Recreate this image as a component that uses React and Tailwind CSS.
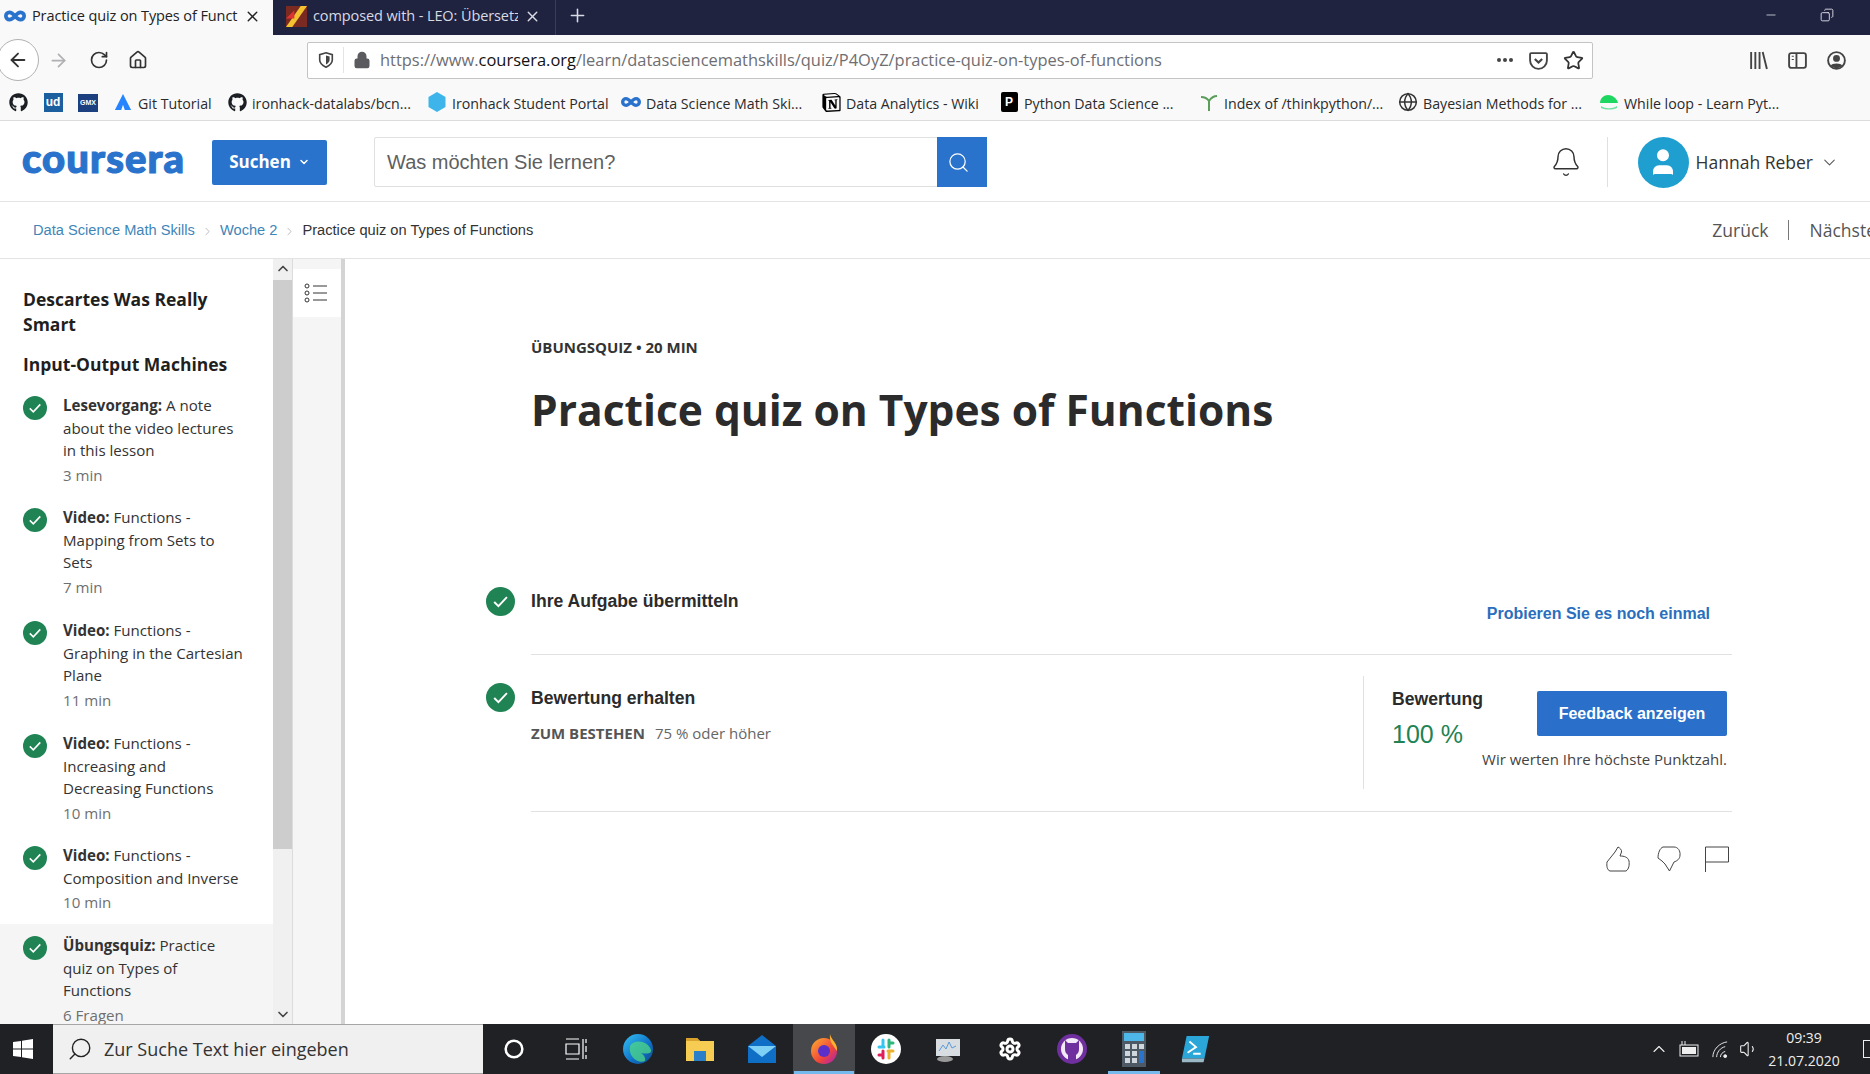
import React from "react";
import { ArrowLeft, ArrowRight, RotateCw, Home, Lock, Star, Search, Bell, ChevronDown, ChevronUp, ChevronRight, Infinity as Inf, X, Plus, Minus, Copy, Settings, Volume1, Globe, Circle, User } from "lucide-react";
import { FaGithub } from "react-icons/fa";
import { SiNotion } from "react-icons/si";

const Co = ({ c = "w-[20px] h-[20px]" }) => <Inf className={`${c} text-[#2a73cc]`} strokeWidth={4} />;
const Gh = () => <FaGithub className="w-[19px] h-[19px] text-[#1b1f23]" />;

const Check = ({ c = "w-[24px] h-[24px]" }) => (
  <svg viewBox="0 0 24 24" className={`${c} shrink-0`}>
    <circle cx="12" cy="12" r="12" fill="#1f8354" />
    <path d="M6.8 12.4l3.5 3.4 7-7.4" fill="none" stroke="#fff" strokeWidth="1.6" />
  </svg>
);

const bookmarks = [
  { w: "w-[35px]", icon: <Gh /> },
  { w: "w-[35px]", icon: <span className="w-[19px] h-[19px] bg-[#1c5f9e] text-white text-[12px] font-bold leading-[19px] text-center font-['Liberation_Sans',sans-serif]">ud</span> },
  { w: "w-[35px]", icon: <span className="w-[20px] h-[18px] bg-[#1c3f80] text-white text-[7px] font-bold leading-[18px] text-center font-['Liberation_Sans',sans-serif]">GMX</span> },
  { w: "w-[114px]", icon: <svg viewBox="0 0 20 20" className="w-[18px] h-[20px]"><path d="M10 1L1 19h7l2-6 2 6h7z" fill="#2684ff" /></svg>, t: "Git Tutorial" },
  { w: "w-[200px]", icon: <Gh />, t: "ironhack-datalabs/bcn..." },
  { w: "w-[194px]", icon: <svg viewBox="0 0 20 20" className="w-[20px] h-[20px]"><path d="M10 0l8.500 5v10L10 20l-8.500-5V5z" fill="#3db5ea" /></svg>, t: "Ironhack Student Portal" },
  { w: "w-[200px]", icon: <Co />, t: "Data Science Math Ski..." },
  { w: "w-[178px]", icon: <SiNotion className="w-[19px] h-[19px] text-black" />, t: "Data Analytics - Wiki" },
  { w: "w-[200px]", icon: <span className="w-[17px] h-[20px] bg-black rounded-[2px] text-white text-[12px] font-bold leading-[20px] text-center font-['Liberation_Sans',sans-serif]">P</span>, t: "Python Data Science ..." },
  { w: "w-[199px]", icon: <svg viewBox="0 0 20 20" className="w-[20px] h-[20px]"><path d="M10 19V9M10 9C8 6 5 5 2 5M10 9c2-3 5-5 8-5" fill="none" stroke="#5a9e5a" strokeWidth="2" /></svg>, t: "Index of /thinkpython/..." },
  { w: "w-[201px]", icon: <Globe className="w-[20px] h-[20px] text-[#333]" strokeWidth={1.8} />, t: "Bayesian Methods for ..." },
  { w: "w-[190px]", icon: <svg viewBox="0 0 20 20" className="w-[20px] h-[20px]"><path d="M1 11c0-5 4-8 8-8s9 3 10 8z" fill="#1ed760" /><path d="M2 14c5 3 11 3 16 0v2c-5 2-11 2-16 0z" fill="#6fe3a0" /></svg>, t: "While loop - Learn Pyt..." },
];

const items = [
  { h: "h-[112px]", b: "Lesevorgang:", t: ["A note", "about the video lectures", "in this lesson"], m: "3 min" },
  { h: "h-[113px]", b: "Video:", t: ["Functions -", "Mapping from Sets to", "Sets"], m: "7 min" },
  { h: "h-[113px]", b: "Video:", t: ["Functions -", "Graphing in the Cartesian", "Plane"], m: "11 min" },
  { h: "h-[112px]", b: "Video:", t: ["Functions -", "Increasing and", "Decreasing Functions"], m: "10 min" },
  { h: "h-[80px]", b: "Video:", t: ["Functions -", "Composition and Inverse"], m: "10 min" },
  { h: "h-[120px]", b: "Übungsquiz:", t: ["Practice", "quiz on Types of", "Functions"], m: "6 Fragen", active: true },
];

function Tabs() {
  return (
    <div className="h-[35px] bg-[#1f2340] flex items-stretch shrink-0">
      <div className="w-[273px] bg-[#f9f9fa] flex items-center pl-[4px] pb-[3px] relative">
        <Co c="w-[22px] h-[22px]" />
        <span className="ml-[6px] w-[206px] overflow-hidden whitespace-nowrap text-[14.5px] tracking-[-0.1px] text-[#222]">Practice quiz on Types of Functions</span>
        <X className="absolute right-[12px] w-[17px] h-[17px] text-[#222]" strokeWidth={2} />
      </div>
      <div className="w-[283px] flex items-center pl-[13px] pb-[3px] border-r border-[#3a3e58] relative">
        <svg viewBox="0 0 20 20" className="w-[21px] h-[21px] shrink-0"><rect width="20" height="20" fill="#7a2a20" /><path d="M0 20L14 0h6L6 20z" fill="#f2c230" /><path d="M0 12l8-8v8z" fill="#d33" /></svg>
        <span className="ml-[6px] w-[205px] overflow-hidden whitespace-nowrap text-[14.5px] tracking-[-0.1px] text-[#d8dae4]">composed with - LEO: Übersetzu</span>
        <X className="absolute right-[14px] w-[17px] h-[17px] text-[#d8dae4]" strokeWidth={2} />
      </div>
      <div className="w-[42px] pb-[5px] flex items-center justify-center"><Plus className="w-[21px] h-[21px] text-[#d8dae4]" strokeWidth={1.8} /></div>
      <div className="ml-auto pb-[6px] flex items-center text-[#e8e8f0]">
        <Minus className="w-[14px] h-[14px] mr-[42px]" strokeWidth={1.3} />
        <Copy className="w-[14px] h-[14px] mr-[36px] -scale-x-100" strokeWidth={1.5} />
      </div>
    </div>
  );
}

function Nav() {
  return (
    <div className="h-[50px] bg-[#f9f9fa] flex items-center shrink-0 relative overflow-hidden">
      <div className="w-[42px] h-[42px] rounded-full border border-[#b1b1b3] bg-white flex items-center justify-center -ml-[3px] shrink-0">
        <ArrowLeft className="w-[22px] h-[22px] text-[#333]" strokeWidth={2} />
      </div>
      <ArrowRight className="ml-[9px] w-[21px] h-[21px] text-[#b0b0b2]" strokeWidth={2} />
      <RotateCw className="ml-[20px] w-[20px] h-[20px] text-[#333]" strokeWidth={2} />
      <Home className="ml-[19px] w-[20px] h-[20px] text-[#333]" strokeWidth={2} />
      <div className="ml-[159px] shrink-0 w-[1286px] h-[37px] bg-white border border-[#c4c4c6] rounded-[2px] flex items-center">
        <svg viewBox="0 0 20 20" className="ml-[9px] w-[18px] h-[18px] shrink-0"><path d="M10 2l7 2v6c0 4-3 6-7 8-4-2-7-4-7-8V4z" fill="none" stroke="#444" strokeWidth="1.8" /><path d="M10 5l4 1v4c0 2-2 4-4 5z" fill="#444" /></svg>
        <span className="ml-[8px] w-px h-[26px] bg-[#e4e4e4]" />
        <Lock className="ml-[9px] w-[18px] h-[18px] text-[#5b5b5f] fill-[#5b5b5f]" strokeWidth={2} />
        <span className="ml-[9px] text-[16.45px] text-[#6e6e72] whitespace-nowrap">https://www.<span className="text-[#111]">coursera.org</span>/learn/datasciencemathskills/quiz/P4OyZ/practice-quiz-on-types-of-functions</span>
        <span className="ml-auto flex items-center">
          <span className="flex gap-[2px]"><i className="w-[4px] h-[4px] rounded-full bg-[#444]" /><i className="w-[4px] h-[4px] rounded-full bg-[#444]" /><i className="w-[4px] h-[4px] rounded-full bg-[#444]" /></span>
          <svg viewBox="0 0 20 20" className="ml-[15px] w-[21px] h-[21px]"><path d="M3 3h14a1 1 0 011 1v6a8 8 0 01-16 0V4a1 1 0 011-1z" fill="none" stroke="#444" strokeWidth="1.8" /><path d="M6.500 8.500L10 12l3.500-3.500" fill="none" stroke="#444" strokeWidth="2" /></svg>
          <Star className="ml-[14px] mr-[8px] w-[21px] h-[21px] text-[#333]" strokeWidth={2} />
        </span>
      </div>
      <div className="ml-[155px] flex items-center shrink-0">
        <svg viewBox="0 0 20 20" className="w-[21px] h-[21px]"><path d="M3 2v16M7 2v16M11 2v16M14 2l4 16" fill="none" stroke="#444" strokeWidth="1.8" /></svg>
        <svg viewBox="0 0 20 20" className="ml-[18px] w-[21px] h-[21px]"><rect x="2" y="3" width="16" height="14" rx="2" fill="none" stroke="#444" strokeWidth="1.8" /><path d="M9 3v14" stroke="#444" strokeWidth="1.8" /><path d="M4.500 6h2M4.500 9h2" stroke="#444" /></svg>
        <svg viewBox="0 0 20 20" className="ml-[18px] w-[21px] h-[21px]"><circle cx="10" cy="10" r="8" fill="none" stroke="#444" strokeWidth="1.8" /><circle cx="10" cy="8" r="3.300" fill="#444" /><path d="M4.500 15c1-3 10-3 11 0-3 3-8 3-11 0z" fill="#444" /></svg>
      </div>
    </div>
  );
}

function Bookmarks() {
  return (
    <div className="h-[35px] bg-[#f9f9fa] border-b border-[#dcdcdc] flex items-center pl-[8px] shrink-0 overflow-hidden box-content">
      {bookmarks.map((b, i) => (
        <div key={i} className={`${b.w} shrink-0 flex items-center whitespace-nowrap text-[14.2px] text-[#2b2b2b]`}>
          <span className="w-[20px] h-[20px] flex items-center justify-center shrink-0">{b.icon}</span>
          {b.t && <span className="ml-[5px] mt-[2px]">{b.t}</span>}
        </div>
      ))}
    </div>
  );
}

function Header() {
  return (
    <div className="h-[81px] bg-white border-b border-[#e3e3e3] flex items-center pl-[22px] pt-[2px] shrink-0 box-border">
      <span className="w-[160px] font-['Lato',sans-serif] font-black text-[40px] leading-none text-[#2a73cc] tracking-[1.1px] [-webkit-text-stroke:1.2px_#2a73cc] -mt-[8px]">coursera</span>
      <button className="ml-[30px] w-[115px] h-[45px] bg-[#2a73cc] rounded-[2px] text-white font-bold text-[17px] flex items-center justify-center font-['Open_Sans',sans-serif]">
        Suchen<ChevronDown className="ml-[7px] w-[12px] h-[12px]" strokeWidth={3} />
      </button>
      <div className="ml-[47px] w-[613px] h-[50px] flex border border-[#e0e0e0] rounded-[2px]">
        <span className="flex-1 pl-[12px] flex items-center text-[20px] text-[#5f5f5f] font-['Liberation_Sans',sans-serif]">Was möchten Sie lernen?</span>
        <span className="w-[50px] pr-[8px] bg-[#2a73cc] flex items-center justify-center -my-px -mr-px"><Search className="w-[23px] h-[23px] text-white" strokeWidth={1.3} /></span>
      </div>
      <Bell className="ml-auto w-[32px] h-[32px] text-[#333]" strokeWidth={1.1} />
      <span className="ml-[25px] w-px h-[50px] bg-[#e0e0e0]" />
      <span className="ml-[30px] w-[51px] h-[51px] rounded-full bg-[#1f9fd0] flex items-center justify-center"><User className="w-[32px] h-[32px] text-white fill-white" strokeWidth={1} /></span>
      <span className="ml-[7px] text-[17.5px] text-[#333]">Hannah Reber</span>
      <ChevronDown className="ml-[7px] mr-[31px] w-[19px] h-[19px] text-[#555]" strokeWidth={1.3} />
    </div>
  );
}

function Breadcrumb() {
  return (
    <div className="h-[57px] bg-white border-b border-[#e3e3e3] flex items-center pl-[33px] pt-[2px] shrink-0 overflow-hidden font-['Liberation_Sans',sans-serif] text-[14.65px] whitespace-nowrap">
      <span className="text-[#3f86b8]">Data Science Math Skills</span>
      <ChevronRight className="mx-[6px] w-[13px] h-[13px] text-[#999]" strokeWidth={1.2} />
      <span className="text-[#3f86b8]">Woche 2</span>
      <ChevronRight className="mx-[6px] w-[13px] h-[13px] text-[#999]" strokeWidth={1.2} />
      <span className="text-[#333]">Practice quiz on Types of Functions</span>
      <span className="ml-auto shrink-0 flex items-center text-[17.5px] text-[#555] font-['Open_Sans',sans-serif] -mr-[6px] -mt-[2px]">
        Zurück
        <span className="ml-[19px] w-px h-[20px] bg-[#777]" />
        <span className="ml-[21px]">Nächste</span>
      </span>
    </div>
  );
}

function Sidebar() {
  return (
    <div className="flex h-full shrink-0">
      <div className="w-[273px] h-full overflow-hidden text-[15.1px] leading-[22.5px] text-[#333]">
        <div className="pl-[23px] pr-[20px] pt-[28px] text-[17.5px] leading-[25px] font-bold text-[#1f1f1f]">Descartes Was Really<br />Smart</div>
        <div className="pl-[23px] pt-[15px] text-[17.5px] leading-[25px] font-bold text-[#1f1f1f]">Input-Output Machines</div>
        <div className="pt-[17px]">
          {items.map((it, i) => (
            <div key={i} className={`${it.h} pl-[23px] flex ${it.active ? "bg-[#f5f5f5] pt-[10px]" : ""}`}>
              <Check c="w-[24px] h-[24px] mt-[2px]" />
              <div className="ml-[16px] whitespace-nowrap">
                <div><b className="font-bold text-[#333]">{it.b}</b> {it.t[0]}</div>
                {it.t.slice(1).map((l) => <div key={l}>{l}</div>)}
                <div className="mt-[2px] text-[#6f6f6f]">{it.m}</div>
              </div>
            </div>
          ))}
        </div>
      </div>
      <div className="w-[20px] h-full bg-[#f0f0f0] border-r border-[#dcdcdc] flex flex-col items-center justify-between relative">
        <ChevronUp className="w-[16px] h-[19px] text-[#444] shrink-0" strokeWidth={2.5} />
        <div className="absolute left-0 top-[21px] w-[19px] h-[569px] bg-[#cdcdcd]" />
        <ChevronDown className="w-[16px] h-[19px] text-[#444] shrink-0" strokeWidth={2.5} />
      </div>
      <div className="w-[48px] h-full bg-[#f5f5f5] pt-[10px]">
        <div className="h-[48px] bg-white flex items-center justify-center pr-[2px]">
          <svg viewBox="0 0 24 20" className="w-[24px] h-[20px]" fill="none" stroke="#333" strokeWidth="1"><circle cx="3" cy="3" r="2" /><circle cx="3" cy="10" r="2" /><circle cx="3" cy="17" r="2" /><path d="M9 3h14M9 10h14M9 17h14" /></svg>
        </div>
      </div>
      <div className="w-[4px] h-full bg-[#d4d4d4]" />
    </div>
  );
}

function Main() {
  return (
    <div className="flex-1 h-full bg-white pl-[141px] overflow-hidden">
      <div className="w-[1246px]">
        <div className="pl-[45px]">
          <div className="pt-[77px] text-[15px] leading-[22px] font-bold text-[#333]">ÜBUNGSQUIZ • 20 MIN</div>
          <h1 className="mt-[24px] text-[42.5px] leading-[56px] font-bold text-[#2b2b2b] whitespace-nowrap">Practice quiz on Types of Functions</h1>
        </div>
        <div className="mt-[149px] flex h-[67px] font-['Liberation_Sans',sans-serif]">
          <Check c="w-[29px] h-[29px]" />
          <span className="ml-[16px] text-[17.6px] leading-[28px] font-bold text-[#2b2b2b]">Ihre Aufgabe übermitteln</span>
          <span className="ml-auto mr-[22px] mt-[13px] text-[16px] leading-[28px] font-bold text-[#2a6fbd]">Probieren Sie es noch einmal</span>
        </div>
        <div className="ml-[45px] h-px bg-[#e1e1e1]" />
        <div className="flex h-[156px]">
          <Check c="w-[29px] h-[29px] mt-[28px]" />
          <div className="ml-[16px] w-[832px] pt-[29px]">
            <div className="text-[17.6px] leading-[28px] font-bold text-[#2b2b2b] font-['Liberation_Sans',sans-serif]">Bewertung erhalten</div>
            <div className="mt-[10px] text-[15px] leading-[22px] text-[#666]"><b className="font-bold text-[#555] text-[15px]">ZUM BESTEHEN</b><span className="ml-[10px]">75 % oder höher</span></div>
          </div>
          <div className="mt-[21px] h-[113px] w-px bg-[#e1e1e1] shrink-0" />
          <div className="flex-1 relative">
            <div className="ml-[28px] pt-[32px] font-['Liberation_Sans',sans-serif]">
              <div className="text-[17.6px] leading-[24px] font-bold text-[#2b2b2b]">Bewertung</div>
              <div className="mt-[6px] text-[25px] leading-[34px] text-[#1f8354]">100 %</div>
            </div>
            <div className="absolute left-[173px] top-[36px] w-[190px] h-[45px] bg-[#2a6fc9] rounded-[2px] flex items-center justify-center text-white font-bold text-[16px] font-['Liberation_Sans',sans-serif]">Feedback anzeigen</div>
            <div className="absolute right-[5px] top-[93px] text-[15px] leading-[22px] text-[#444] whitespace-nowrap">Wir werten Ihre höchste Punktzahl.</div>
          </div>
        </div>
        <div className="ml-[45px] h-px bg-[#e1e1e1]" />
        <div className="flex justify-end items-start pr-[3px] pt-[34px]">
          <svg viewBox="0 0 24 26" className="w-[24px] h-[26px]" fill="none" stroke="#444" strokeWidth="1"><path d="M1 16L9 6l3-5c2 1 4 3 3.500 5L14 10c4 0 8 1 9 5 .5 4 0 8-3 10H4c-3-1-3.500-5-3-9z" /></svg>
          <svg viewBox="0 0 24 26" className="ml-[27px] w-[24px] h-[26px]" fill="none" stroke="#444" strokeWidth="1"><path d="M6 1h11c4 0 6.500 4 6 8 0 4-3 6-6 7l-4.500 9L8 18l-3-3-4-3C1 7 3 2 6 1z" /></svg>
          <svg viewBox="0 0 24 26" className="ml-[24px] w-[24px] h-[26px]" fill="none" stroke="#444" strokeWidth="1"><path d="M.5 26V1h23v15H.500" /></svg>
        </div>
      </div>
    </div>
  );
}

function Taskbar() {
  const slots = [
    <Circle className="w-[20px] h-[20px] text-white" strokeWidth={3} />,
    <svg viewBox="0 0 22 22" className="w-[22px] h-[22px]" fill="none" stroke="#fff" strokeWidth="1.2"><path d="M1 1h13M1 21h13M1 6h13v10H1zM18 1v20M21 1v4M21 8v6M21 17v4" /></svg>,
    <svg viewBox="0 0 32 32" className="w-[32px] h-[32px]"><defs><linearGradient id="eg" x1="0" y1="0" x2="1" y2="1"><stop offset="0" stopColor="#35c1f1" /><stop offset=".6" stopColor="#0f6fc6" /><stop offset="1" stopColor="#114a8b" /></linearGradient></defs><circle cx="16" cy="16" r="15" fill="url(#eg)" /><path d="M8 13c3-7 18-6 21 4 1 4-5 4-10 3 3 2 5 5 4 8-7 3-17-4-15-15z" fill="#4ad28a" opacity=".8" /></svg>,
    <svg viewBox="0 0 30 30" className="w-[30px] h-[30px]"><path d="M1 4h11l3 3h14v20H1z" fill="#f6cc53" /><path d="M1 4h11l3 3H1z" fill="#d8a22c" /><rect x="9" y="17" width="12" height="10" fill="#2a7fc9" /></svg>,
    <svg viewBox="0 0 30 30" className="w-[30px] h-[30px]"><path d="M15 1l14 11v17H1V12z" fill="#0f6fc6" /><path d="M1 12h28L15 23z" fill="#7fd0f5" /></svg>,
    <svg viewBox="0 0 32 32" className="w-[32px] h-[32px]"><defs><linearGradient id="ff" x1="0" y1="0" x2="1" y2="1"><stop offset="0" stopColor="#ffb02e" /><stop offset=".6" stopColor="#f0443a" /><stop offset="1" stopColor="#a31fc4" /></linearGradient></defs><circle cx="16" cy="18" r="13" fill="url(#ff)" /><path d="M22 1c1 6 8 9 7 17-4-6-8-9-7-17z" fill="#ffb02e" /><circle cx="16" cy="18" r="6" fill="#5b2fc9" /></svg>,
    <svg viewBox="0 0 30 30" className="w-[30px] h-[30px]"><circle cx="15" cy="15" r="15" fill="#fff" /><path d="M12 6v7M8 13h5" stroke="#36c5f0" strokeWidth="3" strokeLinecap="round" /><path d="M18 6v7M18 9h4" stroke="#2eb67d" strokeWidth="3" strokeLinecap="round" /><path d="M18 24v-7M22 17h-5" stroke="#ecb22e" strokeWidth="3" strokeLinecap="round" /><path d="M12 24v-7M12 21H8" stroke="#e01e5a" strokeWidth="3" strokeLinecap="round" /></svg>,
    <svg viewBox="0 0 30 30" className="w-[30px] h-[30px]"><rect x="3" y="5" width="24" height="17" fill="#d8dde2" /><path d="M6 17l4-6 3 4 3-7 3 6 4-2" fill="none" stroke="#5a9bd8" /><ellipse cx="12" cy="25" rx="8" ry="3" fill="#9a9a9a" /></svg>,
    <Settings className="w-[24px] h-[24px] text-white" strokeWidth={3} />,
    <svg viewBox="0 0 30 30" className="w-[30px] h-[30px]"><circle cx="15" cy="15" r="15" fill="#6f2f9e" /><circle cx="15" cy="15" r="11" fill="#f2e8f6" /><path d="M8 6l3 3h8l3-3v9a7 7 0 01-3 6v5h-8v-5a7 7 0 01-3-6z" fill="#6f2f9e" /></svg>,
    <svg viewBox="0 0 24 36" className="w-[24px] h-[36px]"><rect width="24" height="36" fill="#4d5a66" /><rect x="2" y="2" width="20" height="8" fill="#4db7ea" /><path d="M3 13h5v5H3zM10 13h5v5h-5zM17 13h5v5h-5zM3 20h5v5H3zM10 20h5v5h-5zM3 27h5v5H3zM10 27h5v5h-5z" fill="#cfd6dc" /><rect x="17" y="20" width="5" height="12" fill="#2a73cc" /></svg>,
    <svg viewBox="0 0 32 32" className="w-[30px] h-[30px]"><path d="M6 2h24l-5 24H1z" fill="#2aa6d8" /><path d="M9 8l7 6-9 6M13 21h8" fill="none" stroke="#fff" strokeWidth="2" /><path d="M1 26h24l-1 4H1z" fill="#9bb8c6" /></svg>,
  ];
  return (
    <div className="h-[50px] bg-[#1f2124] flex items-stretch shrink-0 overflow-hidden">
      <div className="w-[53px] pr-[7px] flex items-center justify-center">
        <svg viewBox="0 0 20 20" className="w-[20px] h-[20px]" fill="#fff"><path d="M0 3l8-1v7.500H0zM9 1.800L20 0v9.500H9zM0 10.500h8V18l-8-1zM9 10.500h11V20L9 18.200z" /></svg>
      </div>
      <div className="w-[430px] bg-[#f0f0f0] border-t border-b border-[#a6a6a6] flex items-center pl-[14px]">
        <Search className="w-[26px] h-[26px] text-[#222] -scale-x-100" strokeWidth={1.3} />
        <span className="ml-[11px] text-[18px] text-[#333]">Zur Suche Text hier eingeben</span>
      </div>
      {slots.map((s, i) => (
        <div key={i} className={`w-[62px] flex items-center justify-center relative ${i === 5 ? "bg-[#47484c]" : ""}`}>
          {s}
          {i === 5 && <span className="absolute left-[1px] right-[1px] bottom-0 h-[3px] bg-[#76b9ed]" />}
          {i === 10 && <span className="absolute left-[5px] right-[5px] bottom-0 h-[3px] bg-[#76b9ed]" />}
        </div>
      ))}
      <div className="ml-auto flex items-center text-[#eee]">
        <ChevronUp className="w-[20px] h-[20px]" strokeWidth={1.3} />
        <svg viewBox="0 0 22 16" className="ml-[9px] w-[22px] h-[16px]"><rect x="2" y="4" width="18" height="11" fill="none" stroke="#eee" /><rect x="4" y="6" width="14" height="7" fill="#eee" /><path d="M4 0v4M7 0v4" stroke="#eee" /></svg>
        <svg viewBox="0 0 20 20" className="ml-[10px] w-[19px] h-[19px]" fill="none" stroke="#eee"><path d="M3 18C3 10 10 3 18 2M7 18c0-5 4-10 9-11M11 18c0-3 2-5 5-6" /><circle cx="16" cy="17" r="1.500" fill="#eee" /></svg>
        <Volume1 className="ml-[10px] w-[20px] h-[20px]" strokeWidth={1.3} />
        <div className="ml-[9px] w-[72px] text-center text-[14px] leading-[23px] whitespace-nowrap">
          <div>09:39</div>
          <div>21.07.2020</div>
        </div>
        <span className="ml-[23px] -mr-[8px] w-[15px] h-[18px] border border-[#eee]" />
      </div>
    </div>
  );
}

export default function App() {
  return (
    <div className="w-[1870px] h-[1074px] flex flex-col overflow-hidden bg-white font-['Open_Sans',sans-serif]">
      <Tabs />
      <Nav />
      <Bookmarks />
      <Header />
      <Breadcrumb />
      <div className="flex-1 min-h-0 flex overflow-hidden">
        <Sidebar />
        <Main />
      </div>
      <Taskbar />
    </div>
  );
}
